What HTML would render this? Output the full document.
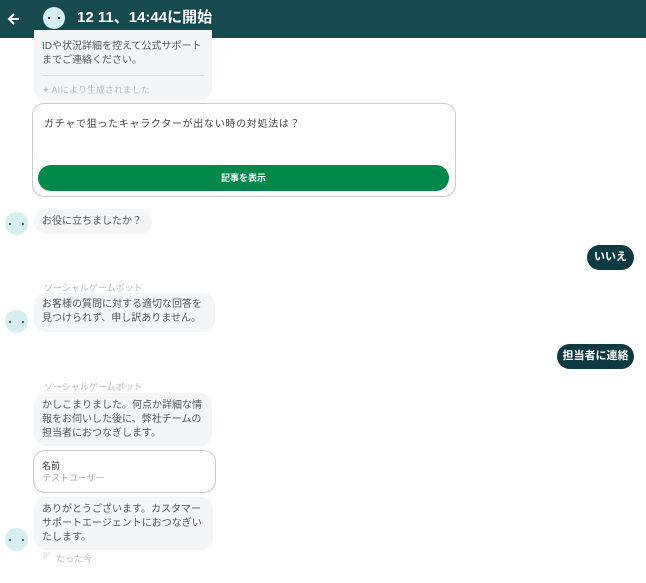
<!DOCTYPE html><html><head><meta charset="utf-8"><style>
*{margin:0;padding:0;box-sizing:border-box}
body{width:646px;height:583px;overflow:hidden;background:#fff;font-family:"Liberation Sans","Noto Sans CJK JP",sans-serif;position:relative;color:#555}
.a{position:absolute;white-space:nowrap}
.hdr{left:0;top:0;width:646px;height:38px;background:#174a4f}
.bub{position:absolute;white-space:nowrap;background:#f4f5f7;border-radius:12px;font-size:10px;line-height:14px;color:#555;padding:6px 8px}
.av{position:absolute;width:23px;height:23px;border-radius:50%;background:#d6eef1}
.av:before,.av:after{content:"";position:absolute;top:11px;width:2px;height:2px;background:#333;border-radius:50%}
.av:before{left:4px}.av:after{right:4px}
.lbl{position:absolute;white-space:nowrap;font-size:9px;color:#bbb}
.me{position:absolute;background:#0d3a40;color:#fff;font-weight:bold;font-size:11px;border-radius:13px;height:25px;line-height:25px;text-align:center;white-space:nowrap}
</style></head><body>
<div class="a hdr"></div>
<svg class="a" style="left:7px;top:12px" width="14" height="14" viewBox="0 0 14 14"><path d="M12 7H2M7 2L2 7l5 5" stroke="#fff" stroke-width="2" fill="none"/></svg>
<div class="a" style="left:43px;top:7px;width:22px;height:22px;border-radius:50%;background:#d6eef1"></div>
<div class="a" style="left:48px;top:17px;width:2px;height:2px;background:#333"></div>
<div class="a" style="left:58px;top:17px;width:2px;height:2px;background:#333"></div>
<div class="a" style="left:77px;top:8px;font-size:15px;font-weight:bold;color:#fff;line-height:20px">12 11、14:44に開始</div>

<div class="bub" style="left:34px;top:30px;width:178px;height:70px;border-radius:0 0 12px 12px;padding-top:10px;line-height:14px">IDや状況詳細を控えて公式サポート<br>までご連絡ください。
<div style="border-top:1px solid #ddd;margin-top:7px;padding-top:7px;font-size:9px;color:#bbb">✦ AIにより生成されました</div></div>

<div class="a" style="left:32px;top:103px;width:424px;height:94px;border:1px solid #ccc;border-radius:12px"></div>
<div class="a" style="left:44px;top:115px;font-size:10px;color:#444;letter-spacing:.7px">ガチャで狙ったキャラクターが出ない時の対処法は？</div>
<div class="a" style="left:38px;top:165px;width:411px;height:26px;background:#00874a;border-radius:13px;color:#fff;font-size:9px;font-weight:bold;text-align:center;line-height:26px">記事を表示</div>

<div class="av" style="left:5px;top:212px"></div>
<div class="bub" style="left:34px;top:209px;width:118px;height:25px">お役に立ちましたか？</div>

<div class="me" style="left:587px;top:245px;width:47px">いいえ</div>

<div class="lbl" style="left:44px;top:281px">ソーシャルゲームボット</div>
<div class="bub" style="left:34px;top:293px;width:181px;height:39px;padding-top:5px">お客様の質問に対する適切な回答を<br>見つけられず、申し訳ありません。</div>
<div class="av" style="left:5px;top:310px"></div>

<div class="me" style="left:557px;top:344px;width:77px">担当者に連絡</div>

<div class="lbl" style="left:44px;top:380px">ソーシャルゲームボット</div>
<div class="bub" style="left:34px;top:393px;width:178px;height:53px">かしこまりました。何点か詳細な情<br>報をお伺いした後に、弊社チームの<br>担当者におつなぎします。</div>

<div class="a" style="left:33px;top:450px;width:183px;height:43px;border:1px solid #ccc;border-radius:12px"></div>
<div class="a" style="left:42px;top:459px;font-size:9px;color:#333">名前</div>
<div class="a" style="left:42px;top:471px;font-size:9px;color:#aaa">テストユーザー</div>

<div class="bub" style="left:34px;top:497px;width:179px;height:53px">ありがとうございます。カスタマー<br>サポートエージェントにおつなぎい<br>たします。</div>
<div class="av" style="left:5px;top:528px"></div>
<svg class="a" style="left:43px;top:552px" width="9" height="9"><path d="M0 0H9L0 9Z" fill="#eee"/></svg>
<div class="lbl" style="left:56px;top:552px">たった今</div>
</body></html>
